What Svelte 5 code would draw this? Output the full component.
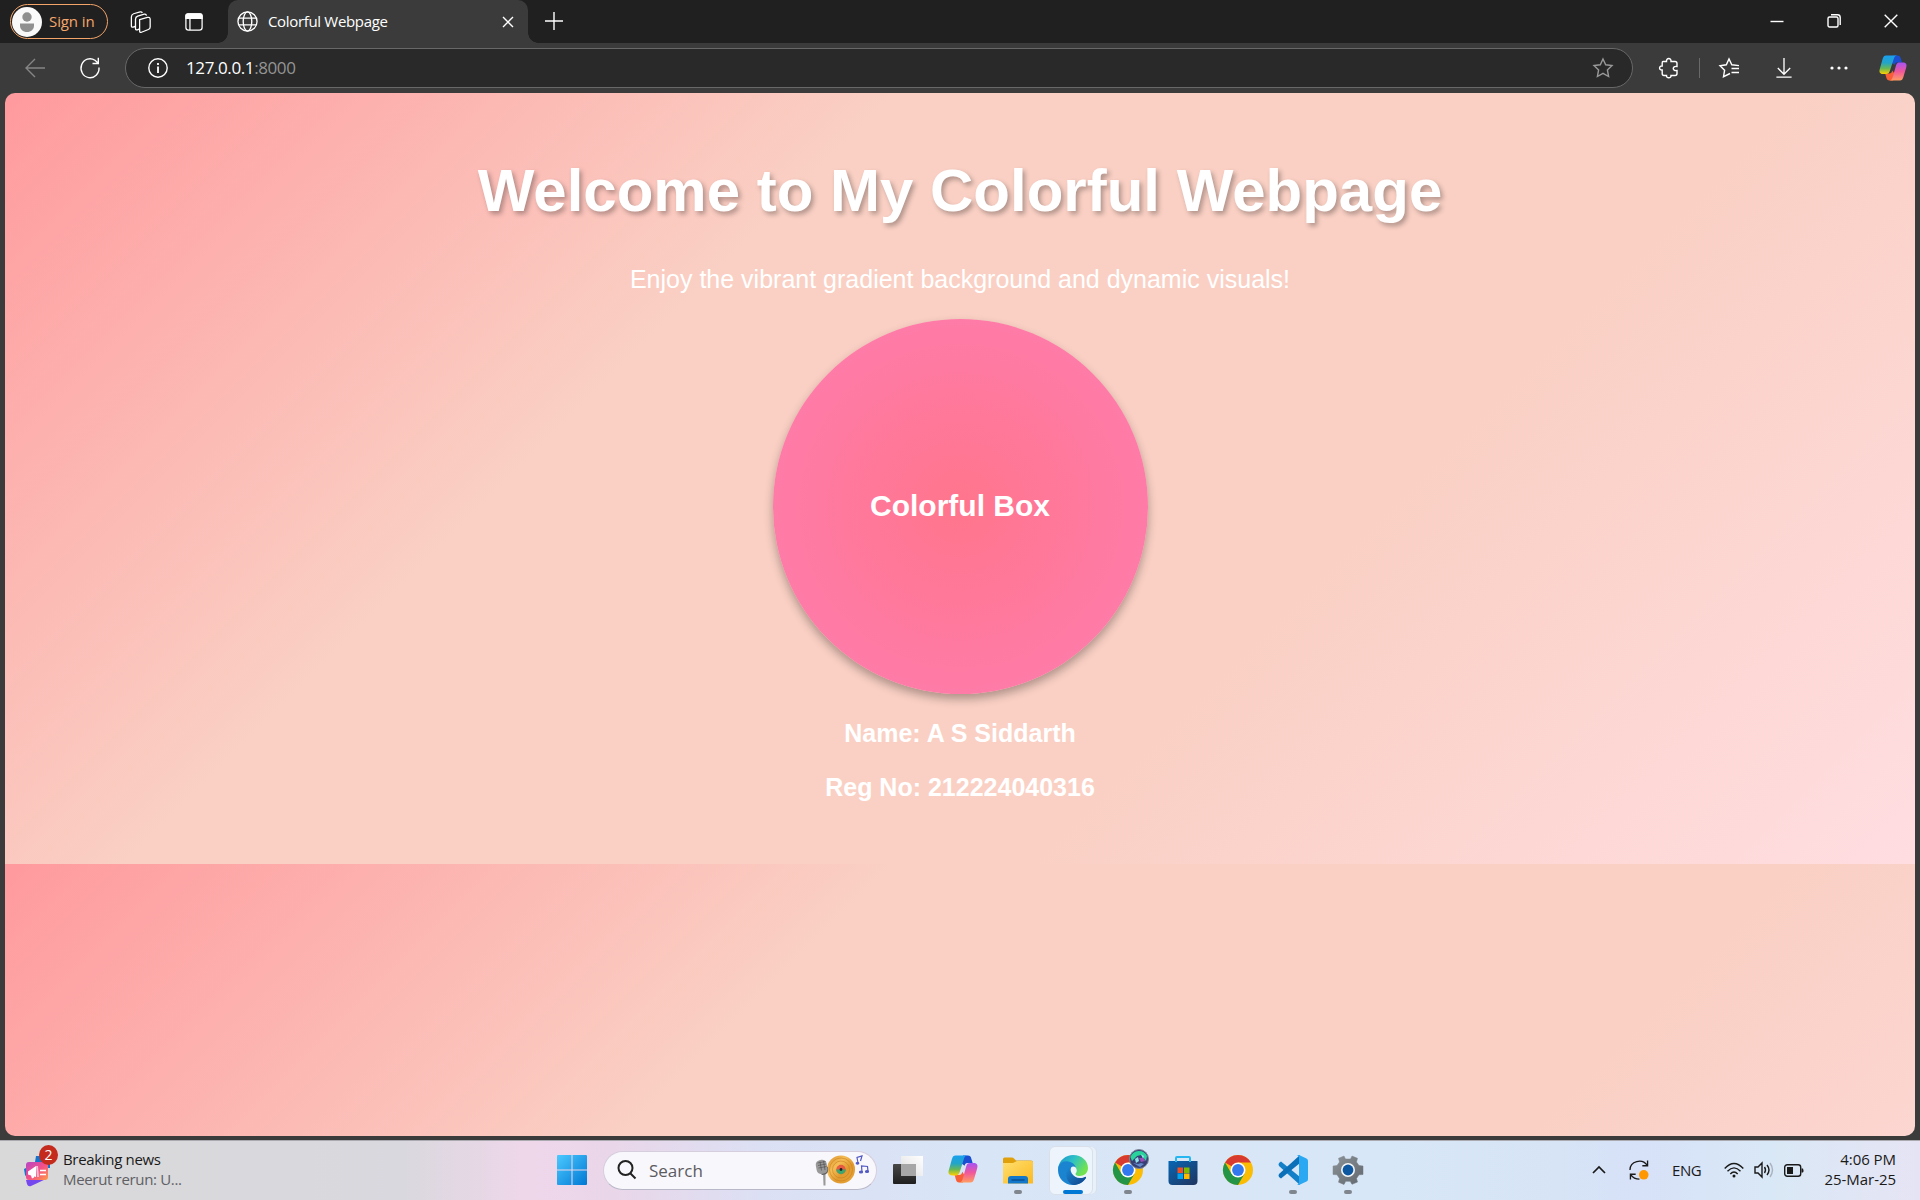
<script>
  const url = { host: '127.0.0.1', port: ':8000' };
</script>

{#snippet copilot(id)}
  <svg class="copilot" viewBox="0 0 28 26">
    <defs>
      <linearGradient id="{id}a" x1="0" y1="0" x2="0" y2="1"><stop offset="0" stop-color="#19a0ee" /><stop offset=".4" stop-color="#23a5c8" /><stop offset=".7" stop-color="#69b855" /><stop offset="1" stop-color="#ffd000" /></linearGradient>
      <linearGradient id="{id}b" x1="0" y1="0" x2="0" y2="1"><stop offset="0" stop-color="#a653f4" /><stop offset=".5" stop-color="#f0579b" /><stop offset="1" stop-color="#ff9c62" /></linearGradient>
    </defs>
    <path d="M14 .5h4.500c2 0 2.800 1 3.300 3l1.200 4h-4c-2 0-3 .5-3.500 2.500l-2.500-2z" fill="#1b4ed0" />
    <path d="M14 25.500H10.500c-2 0-2.600-1-3.200-3l-1.100-4h4c2 0 2.600-1 3.100-3l2 3z" fill="#f95f37" />
    <path d="M7 .5h11.500c-2 0-3 1-3.600 3l-3.900 12c-.8 2.500-1.800 3.500-4 3.500H4c-3.500 0-4-2.500-3.200-5L3.600 4C4.400 1.500 5.200.5 7 .5z" fill="url(#{id}a)" />
    <path d="M21 25.500H10c2 0 3-1 3.600-3l3.400-12c.8-2.500 1.800-3 4-3h3c3.500 0 4 2.500 3.200 5l-2.800 9.500c-.8 2.500-1.600 3.500-3.400 3.500z" fill="url(#{id}b)" />
  </svg>
{/snippet}

{#snippet chrome()}
  <svg class="app" viewBox="0 0 30 30">
    <circle cx="15" cy="15" r="15" fill="#fbbc05" />
    <path d="M15 15 2 7.500A15 15 0 0 1 28 7.500H15z" fill="#d93a2f" />
    <path d="M2 7.500A15 15 0 0 0 15 30L21.500 18.700 15 15 8.500 18.700z" fill="#249446" />
    <circle cx="15" cy="15" r="7.500" fill="#fff" />
    <circle cx="15" cy="15" r="5.900" fill="#3478ed" />
  </svg>
{/snippet}

<div class="screen">
  <header class="tabs">
    <div class="signin">
      <svg viewBox="0 0 30 30"><circle cx="15" cy="15" r="15" fill="#f9f9f9" /><circle cx="15" cy="10" r="4.700" fill="#8f8f8f" /><path d="M8 16.500h14v2c0 4-3 6.500-7 6.500s-7-2.500-7-6.500z" fill="#8f8f8f" /></svg>
      <span>Sign in</span>
    </div>
    <svg class="workspaces line" viewBox="0 0 24 24"><path d="m10.500 9.500 8.500-2.500c1.800-.5 3 .3 3 2v8.500c0 1.500-.6 2.200-2 2.700l-7.500 3c-1.300.5-2 0-2-1.500zM10.500 19.500 8 20.500c-1.300.5-2 0-2-1.500V9c0-1.800.7-2.700 2.400-3.300L15.500 3.500c1.200-.3 2.200.2 2.500 1.500M6 16.500l-2.500 1c-1.300.5-2 0-2-1.500V6.500c0-2 .7-2.900 2.400-3.500L11 1c1.200-.3 2 .1 2.500 1" /></svg>
    <svg class="tabmenu line" viewBox="0 0 20 20"><rect x="1" y="1" width="18" height="18" rx="3" /><path d="M1 5V3q0-2 2-2h14q2 0 2 2v3H1z" fill="#fff" /><path d="M5.500 6v13" /></svg>
    <div class="tab">
      <svg class="line globe" viewBox="0 0 22 22"><circle cx="11" cy="11" r="10" /><ellipse cx="11" cy="11" rx="4.500" ry="10" /><path d="M2 7.500h18M2 14.500h18" /></svg>
      <span>Colorful Webpage</span>
      <svg class="line closetab" viewBox="0 0 12 12"><path d="m1 1 10 10M11 1 1 11" /></svg>
    </div>
    <svg class="line plus" viewBox="0 0 18 18"><path d="M9 0v18M0 9h18" /></svg>
    <div class="window">
      <svg class="line" viewBox="0 0 14 14"><path d="M.5 7.500h13" /></svg>
      <svg class="line" viewBox="0 0 14 14"><rect x="1" y="3" width="10" height="10" rx="1.500" /><path d="M4 .8h6.500q2.700 0 2.700 2.700V11" /></svg>
      <svg class="line" viewBox="0 0 14 14"><path d="m.7.7 12.600 12.600M13.300.7.7 13.300" /></svg>
    </div>
  </header>

  <nav class="toolbar">
    <svg class="line back" viewBox="0 0 20 20"><path d="M20 10H1.500M10 1 1 10l9 9" /></svg>
    <svg class="line reload" viewBox="0 0 20 22"><path d="M19 10.500a9 9.500 0 1 1-4-7.200L18 6M18.300.7V6.500H12.500" /></svg>
    <div class="address">
      <svg class="line info" viewBox="0 0 20 20"><circle cx="10" cy="10" r="9.200" /><path d="M10 8.500v6.500M10 5v2" stroke-width="1.800" /></svg>
      <span class="host">{url.host}</span><span class="port">{url.port}</span>
      <svg class="line star" viewBox="0 0 20 20"><path d="m10 1 2.700 5.800 6.300.8-4.600 4.400 1.200 6.500L10 15.400l-5.600 3.100L5.600 12 1 7.600l6.300-.8z" /></svg>
    </div>
    <svg class="line puzzle" viewBox="0 0 20 20"><path d="M4 3.500h3.500c-.5-4 5-4 4.500 0h4q2 0 2 2v3c-5-1-5 5 0 4v3q0 2-2 2h-4c.5 3-5 3-4.500 0H5q-1.800 0-1.800-2v-3.500c-3.500.5-3.500-4.500 0-4v-3q0-1.500.8-1.500z" /></svg>
    <i class="divider"></i>
    <svg class="line fav" viewBox="0 0 21 20"><path d="M11 15.500 4.500 18.700l1.100-6.500L1 7.700l6.300-.9L10 1l2.800 5.800 7.200.8M12.500 10.500H20M12.500 14.500H20" /></svg>
    <svg class="line download" viewBox="0 0 16 21"><path d="M8 0v16.500M1.500 10.500 8 17l6.500-6.500M0 20h16" /></svg>
    <svg class="dots" viewBox="0 0 18 4"><circle cx="2" cy="2" r="1.600" /><circle cx="9" cy="2" r="1.600" /><circle cx="16" cy="2" r="1.600" /></svg>
    {@render copilot('top')}
  </nav>

  <main class="page">
    <div class="inner">
      <h1>Welcome to My Colorful Webpage</h1>
      <p class="lead">Enjoy the vibrant gradient background and dynamic visuals!</p>
      <div class="ball">Colorful Box</div>
      <p class="detail">Name: A S Siddarth</p>
      <p class="detail">Reg No: 212224040316</p>
    </div>
  </main>

  <footer class="taskbar">
    <div class="news">
      <svg viewBox="0 0 36 38">
        <defs><linearGradient id="newsfill" x1="0" y1="0" x2="1" y2="1"><stop stop-color="#b545c8" /><stop offset=".5" stop-color="#f34f89" /><stop offset="1" stop-color="#ff9a45" /></linearGradient></defs>
        <path d="M10 6h14v12H8zM-2 19l4-2v12l-3-4z" fill="#1673cc" /><path d="m0 30 20-1-15 7q-3 1-4-2z" fill="#7547ee" />
        <rect x="0" y="12" width="22" height="18" rx="3" fill="url(#newsfill)" />
        <path d="M2 21.500v3l3 1 1 3 2-1v-1l2 .5V16z" fill="#fff" /><path d="m11 16 1 11" stroke="#f7bfd8" stroke-width="2" /><path d="M14 20.500h6M14 24.500h6" stroke="#fff" stroke-width="1.500" />
      </svg>
      <b class="count">2</b>
      <div><span>Breaking news</span><span class="dim">Meerut rerun: U...</span></div>
    </div>

    <div class="dock">
      <svg class="start" viewBox="0 0 29 29"><defs><linearGradient id="win" x1="0" y1="0" x2="1" y2="1"><stop stop-color="#4cc9ff" /><stop offset="1" stop-color="#0078d4" /></linearGradient></defs><path d="M1 0h13v14H0V1q0-1 1-1zM15 0h13q1 0 1 1v13H15zM0 15h14v14H1q-1 0-1-1zM15 15h14v13q0 1-1 1H15z" fill="url(#win)" /></svg>
      <div class="search">
        <svg class="lens" viewBox="0 0 20 20"><circle cx="8.500" cy="8" r="7" /><path d="m13.500 13.500 5 5" /></svg>
        <span>Search</span>
        <svg class="music" viewBox="0 0 56 32">
          <defs><linearGradient id="disc" x1="0" y1="0" x2="1" y2="1"><stop stop-color="#dc8e27" /><stop offset=".35" stop-color="#f5bd55" /><stop offset=".6" stop-color="#e09a2f" /><stop offset="1" stop-color="#e9a437" /></linearGradient></defs>
          <circle cx="27" cy="15.500" r="14" fill="url(#disc)" /><g fill="none" stroke="#c97f24" stroke-width=".6"><circle cx="27" cy="15.500" r="11.500" /><circle cx="27" cy="15.500" r="8.500" /></g>
          <circle cx="27" cy="15.500" r="4.700" fill="#e75b43" /><path d="M22.300 15.500a4.700 4.700 0 0 0 9.400 0z" fill="#3ba670" /><circle cx="27" cy="15.500" r="1.400" fill="#222" />
          <path d="m9 18 2.500 0v13.500H9.500z" fill="#999" /><path d="m3 15 11-2q1 6-3 7.500L8 21z" fill="#5c5c5c" /><rect x="2" y="6" width="11" height="14" rx="4.500" transform="rotate(-10 7 12)" fill="#999" /><path d="m3.500 9 8-1.500m-7.500 4 8-1.500m-7.500 4 8-1.500M6 7.500l1.500 9M9.500 7l1.500 9" stroke="#555" stroke-width=".7" />
          <g stroke="#5259c4" stroke-width="1.200" fill="#5259c4"><path d="m44 9-1-5.500 5-1.500-1.500 5" fill="none" /><ellipse cx="43.500" cy="9.300" rx="1.300" ry=".8" /><path d="m48 18-.5-6 6 .5.500 5" fill="none" /><ellipse cx="47" cy="18" rx="1.500" ry="1" /><ellipse cx="53" cy="17.500" rx="1.500" ry="1" /></g>
        </svg>
      </div>
      <svg class="app" viewBox="0 0 30 30"><defs><linearGradient id="dark" x1="0" y1="0" x2="0" y2="1"><stop stop-color="#484848" /><stop offset="1" stop-color="#1f1f1f" /></linearGradient><linearGradient id="pale" x1="1" y1="0" x2="0" y2="1"><stop stop-color="#fff" /><stop offset=".5" stop-color="#efefef" /><stop offset="1" stop-color="#dadada" /></linearGradient></defs><rect y="9" width="23" height="20" rx="1" fill="url(#dark)" /><path d="M8 1h22v20H8z" fill="url(#pale)" /><path d="M8 9h15v12H8z" fill="#a7a7a7" /></svg>
      <div class="app">{@render copilot('dock')}</div>
      <div class="app running">
        <svg viewBox="0 0 30 30"><defs><linearGradient id="folder" x1="0" y1="0" x2="1" y2="1"><stop stop-color="#ffdf70" /><stop offset="1" stop-color="#fbb91f" /></linearGradient></defs><path d="M0 4q0-1.500 1.500-1.500H9q1 0 2 1l2 2h15q2 0 2 2V10H0z" fill="#dfa00c" /><path d="M0 8h10l4-2h14.500Q30 6 30 7.500v21H0z" fill="url(#folder)" /><path d="M5 28.500v-4.500Q5 21 8 21h14q3 0 3 3v4.500z" fill="#1478ca" /><path d="M8.500 25h13" stroke="#0b4f91" stroke-width="1.500" /></svg>
      </div>
      <div class="app running active">
        <svg viewBox="0 0 30 30"><defs><linearGradient id="wave" x1="0" y1="0" x2="1" y2=".5"><stop stop-color="#198fd0" /><stop offset=".5" stop-color="#2dc1c6" /><stop offset="1" stop-color="#72e34f" /></linearGradient><linearGradient id="deep" x1="0" y1="0" x2="1" y2="1"><stop stop-color="#1b8cd6" /><stop offset="1" stop-color="#103f87" /></linearGradient></defs>
          <path d="M0 14C1 5 8 0 15 0c9 0 15 6 15 13 0 5-4 8-8.500 8-3 0-5-1.500-3.500-3 2-2.500 0-7-4-8.500C9 7.500 3 9 0 14z" fill="url(#wave)" /><path d="M0 15c0-6 5-9.500 10-8.500 4 .5 7 3 8 6-3-2-6-.5-6 3 0 5 5 8.500 10 8 2-.1 4-.7 5.500-1.500q.8 0 .5 1C25 27.500 20 30 15 30 6 30 0 23 0 15z" fill="#1b84d0" /><path d="M9 15c1-3 3-4 5-4-4 4 1 12 8 12 2.500 0 4-.6 5.500-1.300q.8.2.5 1C25 27.500 20 30 15 30 9 28 7 20 9 15z" fill="url(#deep)" /></svg>
      </div>
      <div class="app running">
        {@render chrome()}
        <svg class="avatar" viewBox="0 0 20 20"><circle cx="10" cy="10" r="9.500" fill="#383f75" stroke="#7c8799" /><path d="M1.500 8A9 9 0 0 1 18 7l-1 5-5-6-4 1-5 5z" fill="#29d39b" /><path d="m6 10 3-2 1 4-3 2zM12 5l3 2-1 3z" fill="#8de0e8" /><path d="m10 9 5 0 1 3-4 1z" fill="#9b4bb8" /><path d="m4 14 5 1 3-1 3 1-4 3z" fill="#6288ca" /></svg>
      </div>
      <svg class="app" viewBox="0 0 30 30"><defs><linearGradient id="bag" x1="0" y1="0" x2="1" y2="1"><stop stop-color="#0866b4" /><stop offset="1" stop-color="#20345e" /></linearGradient></defs><path d="M.5 6h29v20q0 4-4 4h-21q-4 0-4-4z" fill="url(#bag)" /><path d="M8 7V3q0-1 1-1h12q1 0 1 1v4" fill="none" stroke="#26b7f0" stroke-width="2" /><path d="M9.500 12.500H15V18H9.500z" fill="#f25022" /><path d="M16 12.500h5.500V18H16z" fill="#7fba00" /><path d="M9.500 18.500H15V24H9.500z" fill="#00a4ef" /><path d="M16 18.500h5.500V24H16z" fill="#ffb900" /></svg>
      <div class="app">{@render chrome()}</div>
      <div class="app running">
        <svg viewBox="0 0 30 30"><path d="m1 8 2-1.500 19 15.500V30L1 11q-1-1.500 0-3z" fill="#1480c8" /><path d="m1 22 2 1.500L22 8V0L1 19q-1 1.500 0 3z" fill="#0c70b9" /><path d="m21 0 7.500 3.500Q30 4 30 6v18q0 2-1.500 2.500L21 30q-1 .2-2-1 2 .5 2-1V2q0-1.500-2-1 1-1.200 2-1z" fill="#2aa8f2" /></svg>
      </div>
      <div class="app running">
        <svg viewBox="0 0 30 30"><defs><linearGradient id="gear" x1="0" y1="0" x2="1" y2="1"><stop stop-color="#8b9298" /><stop offset="1" stop-color="#62686e" /></linearGradient></defs><path d="m11 1 1.500 3h5L19 1l5.500 2.300L23.500 7l2.500 3.500 4 .5v8.500l-4 .3-2.500 3.700 1 3.500-5.500 2.300-1.800-3h-4.500L11 29.500l-5.500-2.300 1-3.700L4 19.800l-4-.3V11l4-.5L6.500 7l-1-3.700z" fill="url(#gear)" stroke="url(#gear)" stroke-width=".5" stroke-linejoin="round" /><circle cx="15" cy="15" r="7" fill="#f4f6f8" /><circle cx="15" cy="15" r="5.400" fill="#0d56a0" /></svg>
      </div>
    </div>

    <div class="tray">
      <svg class="up ink" viewBox="0 0 14 8"><path d="m1 7 6-6 6 6" /></svg>
      <svg class="sync ink" viewBox="0 0 21 21"><path d="M1 10.500C1 1 14-2 19 5.500M19.500.5v5.500H14M11 20Q5 20 2 15.500M1.500 20.500V15H7" /><circle cx="15.500" cy="15.500" r="5" fill="#ff9800" stroke="none" /></svg>
      <span class="lang">ENG</span>
      <svg class="wifi ink" viewBox="0 0 20 16"><path d="M.7 6.500Q10-3.500 19.300 6.500M3.500 9.300Q10 2.500 16.500 9.300M6.300 12Q10 8 13.700 12" /><circle cx="10" cy="14" r="1.500" fill="#1a1a1a" stroke="none" /></svg>
      <svg class="sound ink" viewBox="0 0 20 16"><path d="M1 5h3l4-4v14l-4-4H1zM10.500 5q2 3 0 6M13 3q4 5 0 10" /><path d="M16 1q5 7 0 14" stroke="#aab2bf" /></svg>
      <svg class="battery ink" viewBox="0 0 20 13"><rect x=".7" y=".7" width="16" height="11.600" rx="2.500" /><path d="M3 3h6v7H3zM17.500 4.500H19q1 2 0 4h-1.500z" fill="#1a1a1a" stroke="none" /></svg>
      <div class="clock"><span>4:06 PM</span><span>25-Mar-25</span></div>
    </div>
  </footer>
</div>

<style>
  :global(body) { margin: 0; background: #3b3b3b; }
  :global(*) { box-sizing: border-box; }
  svg { display: block; flex: none; overflow: visible; }
  .screen { width: 1920px; height: 1200px; display: flex; flex-direction: column; overflow: hidden; background: #3b3b3b; font: 16px 'Open Sans', 'Noto Sans', sans-serif; }
  .line { fill: none; stroke: #fff; stroke-width: 1.4; }

  .tabs { height: 43px; flex: none; display: flex; align-items: center; background: #202020; padding-left: 10px; color: #fff; }
  .signin { width: 98px; height: 35px; border: 1.5px solid #f3a468; border-radius: 18px; display: flex; align-items: center; gap: 7px; padding-left: 1px; color: #f5a76b; font-size: 15px; letter-spacing: -.1px; white-space: nowrap; }
  .signin svg { width: 30px; height: 30px; }
  .signin span, .tab span { padding-bottom: 2px; }
  .workspaces { width: 22px; height: 22px; margin-left: 22px; }
  .tabmenu { width: 18px; height: 18px; margin-left: 33px; }
  .tab { width: 300px; height: 43px; margin-left: 25px; display: flex; align-items: center; background: #3b3b3b; border-radius: 10px 10px 0 0; padding: 0 14px 0 9px; font-size: 15px; letter-spacing: -.33px; position: relative; }
  .tab::before, .tab::after { content: ''; position: absolute; bottom: 0; width: 10px; height: 10px; }
  .tab::before { left: -10px; background: radial-gradient(circle at 0 0, #202020 9.500px, #3b3b3b 10px); }
  .tab::after { right: -10px; background: radial-gradient(circle at 100% 0, #202020 9.500px, #3b3b3b 10px); }
  .globe { width: 21px; height: 21px; margin-right: 10px; }
  .closetab { width: 12px; height: 12px; margin-left: auto; }
  .plus { width: 18px; height: 18px; margin: -2px 0 0 17px; }
  .window { margin-left: auto; display: flex; gap: 43px; padding: 0 22px 1px 0; }
  .window svg { width: 14px; height: 14px; }

  .toolbar { height: 50px; flex: none; display: flex; align-items: center; padding: 0 13px 1px 25px; }
  .back { width: 20px; height: 20px; stroke: #858585; }
  .reload { width: 20px; height: 22px; margin-left: 35px; }
  .address { width: 1508px; height: 40px; margin: 1px 0 0 25px; border: 1px solid #686868; border-radius: 20px; background: #292929; display: flex; align-items: center; padding: 0 19px 1px 22px; font-size: 17px; letter-spacing: -.4px; }
  .info { width: 20px; height: 20px; margin-right: 18px; }
  .host, .port { padding-bottom: 1px; }
  .host { color: #fff; }
  .port { color: #949494; }
  .star { width: 20px; height: 20px; margin-left: auto; stroke: #999; }
  .puzzle { width: 20px; height: 20px; margin-left: 26px; }
  .divider { width: 1px; height: 20px; margin-left: 20px; background: #696969; }
  .fav { width: 21px; height: 20px; margin-left: 19px; }
  .download { width: 16px; height: 20px; margin-left: 36px; }
  .dots { width: 18px; height: 4px; margin-left: 38px; fill: #fff; }
  .copilot { width: 28px; height: 26px; }
  .toolbar .copilot { margin-left: auto; }

  .page { width: 1910px; height: 1043px; flex: none; margin-left: 5px; border-radius: 10px; color: #fff; text-align: center; font-family: 'Liberation Sans', Arial, sans-serif; background: linear-gradient(135deg, #ff9a9e, #fad0c4, #fad0c4, #ffdde1) 0 0 / 100% 771px; }
  .inner { display: flex; flex-direction: column; align-items: center; padding-top: 63px; }
  h1 { margin: 0; font-size: 60px; line-height: 69px; text-shadow: 2.500px 2.500px 5px rgba(0, 0, 0, .3); }
  .lead { margin: 40px 0 0; font-size: 25px; line-height: 29px; }
  .ball { width: 375px; height: 375px; margin-top: 25px; padding-bottom: 2px; border-radius: 50%; display: grid; place-items: center; font-size: 30px; font-weight: bold; background: radial-gradient(circle, #ff758c, #ff7eb3); box-shadow: 0 5px 10px rgba(0, 0, 0, .3); }
  .detail { margin: 25px 0 0; font-size: 25px; line-height: 29px; font-weight: bold; }

  .taskbar { height: 60px; flex: none; margin-top: 4px; display: flex; align-items: center; border-top: 1px solid #aaaab0; padding-bottom: 1px; color: #1a1a1a; background: linear-gradient(90deg, #d9d9da 0, #d9d8de 400px, #efd7ea 530px, #ead6e9 610px, #dce0f4 760px, #d8e5f6 960px, #d8e7f7 1380px, #d6e4f6 1560px, #d7e1f8 1640px, #d9e8f6 1770px, #e6e4f4 1920px); }
  .news { width: 557px; display: flex; align-items: center; padding: 0 0 2px 26px; position: relative; line-height: 20px; }
  .news > svg { width: 36px; height: 38px; margin: -1px 1px 0 0; }
  .news span, .clock span { display: block; font-size: 15px; letter-spacing: -.33px; }
  .news .dim { color: #606064; }
  .count { position: absolute; left: 39px; top: -4px; width: 19px; height: 20px; border-radius: 50%; background: #c42b1c; color: #fff; text-align: center; font-size: 14px; font-weight: 400; }
  .dock { display: flex; align-items: center; }
  .start { width: 30px; height: 30px; }
  .search { width: 274px; height: 39px; margin: 0 16px; border: 1px solid #d6cddd; border-bottom-color: #b9b8c8; border-radius: 20px; display: flex; align-items: center; background: #f8f7fc; padding: 0 6px 0 13px; color: #5b5b5f; font-size: 17px; }
  .lens { width: 20px; height: 20px; margin-right: 12px; fill: none; stroke: #222; stroke-width: 2; }
  .music { width: 56px; height: 32px; margin-left: auto; }
  .app { width: 30px; height: 30px; margin-right: 25px; position: relative; flex: none; }
  .app > svg { width: 30px; height: 30px; margin: 0; }
  .app .copilot { height: 28px; }
  .running::after { content: ''; position: absolute; left: 11px; bottom: -9px; width: 8px; height: 4px; border-radius: 2px; background: #80868e; }
  .active::before { content: ''; position: absolute; inset: -9px -5px -10px -9px; border: 1px solid #d9e0ea; border-radius: 6px; background: #edf4fb; box-shadow: 4px 0 0 -1px #e8f1fa, 5px 0 0 -1px #d9e0ea; }
  .active > svg { position: relative; }
  .active::after { left: 5px; width: 20px; background: #0078d4; }
  .app > .avatar { position: absolute; width: 20px; height: 20px; left: 16px; top: -6px; }

  .tray { margin-left: auto; display: flex; align-items: center; padding-right: 24px; }
  .ink { fill: none; stroke: #1a1a1a; stroke-width: 1.400; }
  .up { width: 14px; height: 8px; stroke-width: 1.700; }
  .sync { width: 20px; height: 20px; margin-left: 23px; }
  .lang { margin-left: 23px; width: 30px; font-size: 15px; letter-spacing: -.4px; }
  .wifi { width: 20px; height: 16px; margin-left: 22px; }
  .sound { width: 20px; height: 16px; margin-left: 10px; }
  .battery { width: 20px; height: 13px; margin-left: 10px; }
  .clock { width: 75px; margin-left: 17px; padding-bottom: 2px; text-align: right; line-height: 20px; white-space: nowrap; }
  .clock span { letter-spacing: -.05px; }
</style>
